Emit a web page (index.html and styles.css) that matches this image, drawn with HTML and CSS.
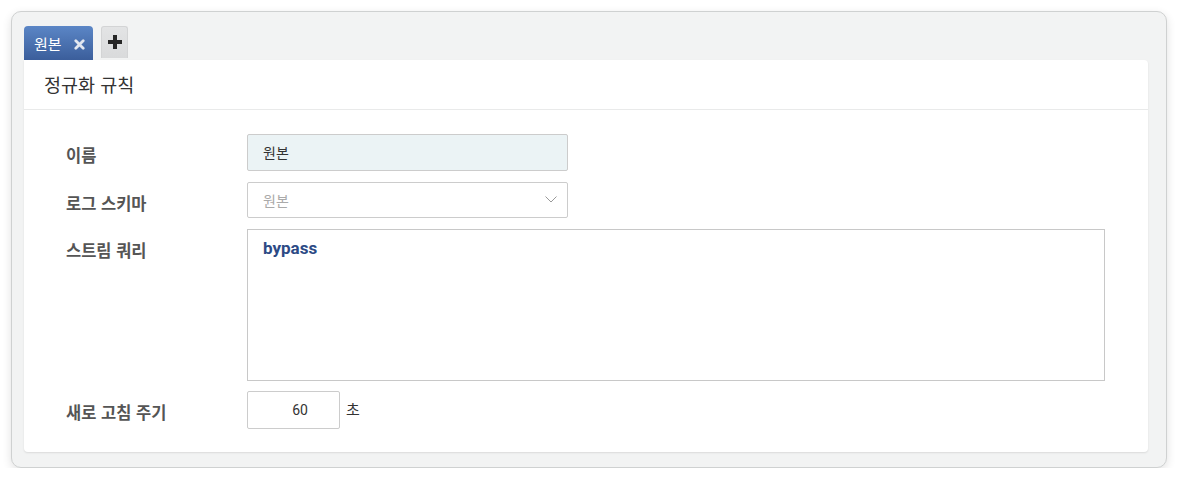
FILE: index.html
```html
<!DOCTYPE html>
<html lang="ko">
<head>
<meta charset="utf-8">
<link rel="stylesheet" href="styles.css">
</head>
<body>
<div class="panel">
  <div class="tabs">
    <div class="tab active"><span class="tab-label">원본</span><svg class="tab-close" width="11" height="11" viewBox="0 0 11 11"><path d="M1.8 1.8L9.2 9.2M9.2 1.8L1.8 9.2" stroke="#e2e7f0" stroke-width="2.8" stroke-linecap="round"/></svg></div>
    <div class="tab-add"><svg width="14" height="14" viewBox="0 0 14 14"><path d="M5 0h4v5h5v4H9v5H5V9H0V5h5z" fill="#262626"/></svg></div>
  </div>
  <div class="card">
    <div class="card-header">정규화 규칙</div>
    <div class="card-body">
      <div class="row">
        <div class="label">이름</div>
        <div class="field"><div class="input readonly">원본</div></div>
      </div>
      <div class="row">
        <div class="label">로그 스키마</div>
        <div class="field"><div class="input select"><span class="placeholder">원본</span><svg class="chev" width="12" height="7" viewBox="0 0 12 7"><path d="M0.5 0.5L6 6L11.5 0.5" fill="none" stroke="#999" stroke-width="1"/></svg></div></div>
      </div>
      <div class="row">
        <div class="label">스트림 쿼리</div>
        <div class="field"><div class="textarea">bypass</div></div>
      </div>
      <div class="row row-last">
        <div class="label">새로 고침 주기</div>
        <div class="field inline"><div class="input number">60</div><span class="unit">초</span></div>
      </div>
    </div>
  </div>
</div>
</body>
</html>
```
FILE: styles.css
```css
* { box-sizing: border-box; }
body {
  margin: 0;
  background: #ffffff;
  font-family: "Noto Sans CJK KR", "Roboto", "Noto Sans", sans-serif;
  color: #333;
}
.panel {
  margin: 11px 0 0 11px;
  width: 1156px;
  height: 457px;
  border: 1px solid #cfd1d1;
  border-radius: 10px;
  background: #f2f3f3;
  box-shadow: 0 3px 10px rgba(0,0,0,0.12);
  padding: 14px 18px 14px 12px;
}
.tabs {
  display: flex;
  align-items: flex-start;
  gap: 8px;
  height: 34px;
}
.tab {
  width: 69px;
  height: 34px;
  border-radius: 4px 4px 0 0;
  background: linear-gradient(#5b86c6, #3b5e9b);
  display: flex;
  align-items: center;
  padding-left: 10px;
  color: #fff;
  font-size: 15px;
}
.tab-label { line-height: 1; }
.tab-close {
  margin-left: 12px;
  margin-top: 2px;
}
.tab-add {
  width: 27px;
  height: 32px;
  border: 1px solid #d3d4d5;
  border-bottom: none;
  border-radius: 3px 3px 0 0;
  background: linear-gradient(#e3e4e5, #d9dadb);
  display: flex;
  align-items: center;
  justify-content: center;
  padding-bottom: 2px;
}
.card {
  background: #fff;
  border-radius: 0 4px 4px 4px;
  box-shadow: 0 1px 2px rgba(0,0,0,0.1);
  height: 392px;
}
.card-header {
  height: 50px;
  border-bottom: 1px solid #e9eaea;
  padding-left: 20px;
  font-size: 18.5px;
  line-height: 48px;
  color: #333;
}
.card-body {
  padding: 24px 44px 24px 42px;
  display: flex;
  flex-direction: column;
  gap: 11px;
}
.row {
  display: flex;
  align-items: flex-start;
}
.row-last { margin-top: -1px; }
.label {
  width: 181px;
  flex: none;
  font-size: 16.5px;
  font-weight: bold;
  color: #555;
  line-height: 20px;
  padding-top: 11px;
}
.field { flex: 1; }
.field.inline { display: flex; align-items: center; }
.input {
  width: 321px;
  height: 37px;
  border: 1px solid #cccccc;
  border-radius: 2px;
  padding: 0 15px;
  font-size: 14px;
  line-height: 35px;
  color: #333;
}
.input.readonly {
  background: #ebf3f5;
}
.input.select {
  height: 36px;
  line-height: 34px;
  display: flex;
  justify-content: space-between;
  align-items: center;
  padding-right: 10px;
}
.placeholder { color: #aaa; }
.chev { margin-top: -2px; }
.textarea {
  width: 858px;
  height: 152px;
  border: 1px solid #c8c8c8;
  padding: 8px 15px;
  font-family: "Roboto", sans-serif;
  font-weight: bold;
  font-size: 17px;
  color: #2c4a85;
}
.input.number {
  width: 93px;
  height: 38px;
  line-height: 36px;
  text-align: center;
  padding: 0 0 0 13px;
  font-family: "Roboto", sans-serif;
}
.unit {
  margin-left: 6px;
  margin-top: -4px;
  font-size: 15px;
  color: #333;
}
```
